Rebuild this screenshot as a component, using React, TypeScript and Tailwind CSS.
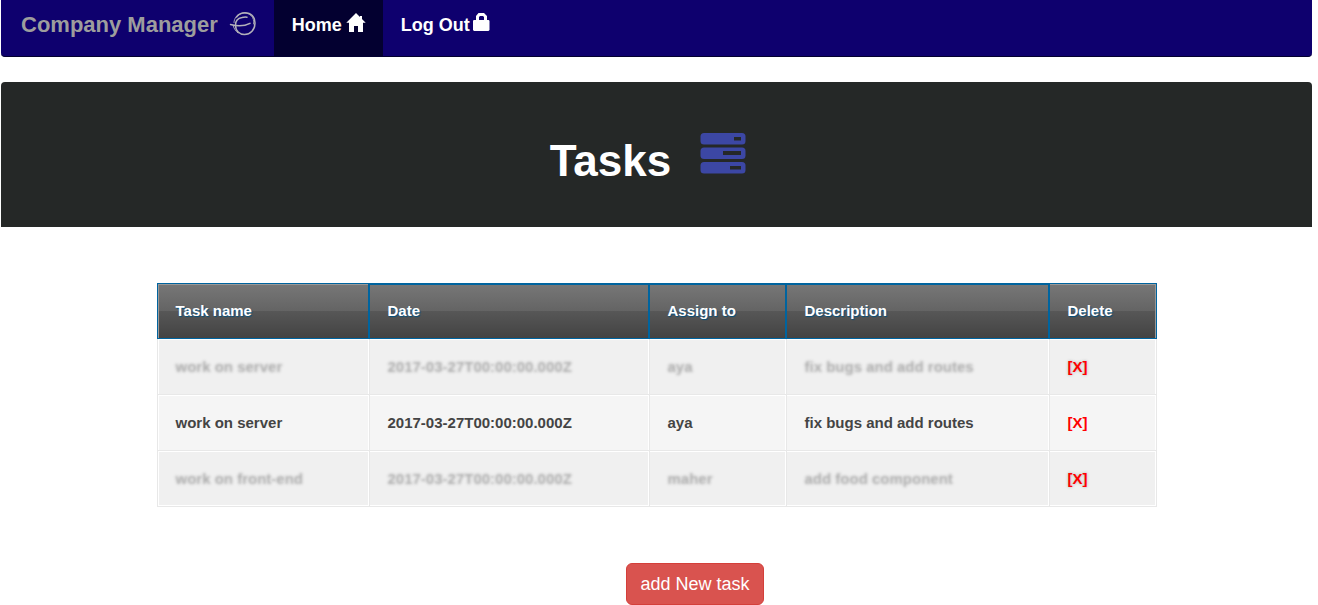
import React from "react";

type Task = { name: string; date: string; assignee: string; description: string; blurred: boolean };

const tasks: Task[] = [
  { name: "work on server", date: "2017-03-27T00:00:00.000Z", assignee: "aya", description: "fix bugs and add routes", blurred: true },
  { name: "work on server", date: "2017-03-27T00:00:00.000Z", assignee: "aya", description: "fix bugs and add routes", blurred: false },
  { name: "work on front-end", date: "2017-03-27T00:00:00.000Z", assignee: "maher", description: "add food component", blurred: true },
];

const columns = ["Task name", "Date", "Assign to", "Description", "Delete"];

function BrandIcon() {
  return (
    <svg viewBox="0 0 28 26" className="h-[26px] w-7 text-[#b3b1ba]" fill="none" stroke="currentColor" strokeLinecap="round" aria-hidden="true">
      <path d="M7.500 6C9.500 3 12.500 1.700 16 1.700c6 0 10 4.300 10 10.300C26 18.500 21.500 23.500 15.500 23.500 10.500 23.500 6.500 20 6.500 14 6.500 9.500 9.500 7.200 13 6.500c1.700-.4 3.500-.5 5-.3" strokeWidth="1.500" />
      <path d="M9 4.500C13 1 19 1.500 22 4.500c2.500 2.500 3 5.500 2.500 8.500" strokeWidth=".8" />
      <path d="M1.500 13.500c7 1.800 14 1.600 19.500-1.200" strokeWidth="1.500" />
      <path d="M4 14c.5 3 2.500 6 5 8M5 11.500c0-2 .8-4 2-5.500" strokeWidth=".9" />
    </svg>
  );
}

function HomeIcon() {
  return (
    <svg viewBox="0 0 20 19" className="h-[19px] w-5" fill="currentColor" aria-hidden="true">
      <path d="M10 0l9.700 9.700H17V19h-5v-6H8v6H3V9.700H.3z" />
      <path d="M14 3h2v3h-2z" />
    </svg>
  );
}

function LockIcon() {
  return (
    <svg viewBox="0 0 18 18" className="h-[18px] w-[18px]" fill="currentColor" aria-hidden="true">
      <path fillRule="evenodd" d="M4 7V3L6.500 0h5.500L15 3v4h1.700l.8.800v9.200l-1 1h-14.500l-1-1V7.800l.8-.8zM7 7h5V4l-1-1H8L7 4z" />
    </svg>
  );
}

function ServerIcon() {
  return (
    <svg viewBox="0 0 46 42" className="h-[42px] w-[46px]" aria-hidden="true">
      <g fill="#3c47a4">
        <rect x="0.500" y="0" width="45" height="11.500" rx="3.500" />
        <rect x="0.500" y="14.500" width="45" height="11.500" rx="3.500" />
        <rect x="0.500" y="29" width="45" height="11.500" rx="3.500" />
      </g>
      <g fill="#252827">
        <rect x="34" y="4" width="7" height="3.500" />
        <rect x="23" y="18" width="18" height="4" />
        <rect x="30" y="33" width="11" height="3.500" />
      </g>
    </svg>
  );
}

const headBase = "h-14 border-t border-b border-l border-[#00649f] bg-[linear-gradient(#777_0%,#646464_50%,#575757_50%,#434343_100%)] pt-0 pl-[18px] text-left align-middle font-bold text-white [text-shadow:1px_1px_1px_#00507f]";
const headShadow = [
  "shadow-[inset_-1px_0_0_#00649f,inset_1px_1px_0_#999]",
  "shadow-[inset_-1px_1px_0_#00649f]",
  "shadow-[inset_-1px_1px_0_#00649f]",
  "shadow-[inset_-1px_1px_0_#00649f]",
  "border-r shadow-[inset_-1px_1px_0_#999]",
];

function bodyCell(column: number, row: number) {
  return [
    "h-14 border-b border-l border-[#e8e8e8] pt-0.5 pl-[18px] align-middle",
    row % 2 === 0 ? "bg-[#f0f0f0]" : "bg-[#f5f5f5]",
    row === 2
      ? column === 0 ? "shadow-[inset_1px_1px_0_#fff,inset_-1px_-1px_0_#fff]" : "shadow-[inset_0_1px_0_#fff,inset_-1px_-1px_0_#fff]"
      : column === 0 ? "shadow-[inset_1px_1px_0_#fff,inset_-1px_0_0_#fff]" : "shadow-[inset_-1px_1px_0_#fff]",
    column === 4 ? "border-r" : "",
  ].join(" ");
}

export default function App() {
  return (
    <div className="pr-1.5 pl-px font-['Liberation_Sans',Arial,sans-serif]">
      <nav className="flex h-[57px] rounded-b border-b border-[#030030] bg-[#0e006e] text-lg font-bold text-white">
        <a href="#" className="flex items-start gap-[11px] pt-[11px] pr-[17px] pl-5 text-[22px] leading-7 text-[#9d9d9d]">
          Company Manager
          <BrandIcon />
        </a>
        <a href="#home" className="flex items-start gap-1 bg-[#030030] pt-[13px] pr-[17px] pl-[18px] leading-6">
          Home
          <HomeIcon />
        </a>
        <a href="#logout" className="flex items-start gap-0.5 px-[18px] pt-[13px] leading-6">
          Log Out
          <LockIcon />
        </a>
      </nav>

      <header className="mt-[25px] flex h-[145px] items-start justify-center gap-[29px] rounded-t bg-[#252827] pr-[17px] pt-[51px]">
        <h1 className="pt-[3px] text-[44px] leading-[50px] font-bold text-white">Tasks</h1>
        <ServerIcon />
      </header>

      <main className="pt-14">
        <table className="mx-auto w-full max-w-[1000px] table-fixed border-separate border-spacing-0 text-[15px] font-bold text-[#444]">
          <colgroup>
            <col className="w-[21.2%]" />
            <col className="w-[28%]" />
            <col className="w-[13.7%]" />
            <col className="w-[26.3%]" />
            <col className="w-[10.8%]" />
          </colgroup>
          <thead>
            <tr>
              {columns.map((label, i) => (
                <th key={label} scope="col" className={`${headBase} ${headShadow[i]}`}>{label}</th>
              ))}
            </tr>
          </thead>
          <tbody>
            {tasks.map((task, row) => (
              <tr key={row}>
                {[task.name, task.date, task.assignee, task.description].map((value, column) => (
                  <td key={column} className={bodyCell(column, row)}>
                    <span className={task.blurred ? "text-transparent [text-shadow:0_0_3px_#aaa]" : ""}>{value}</span>
                  </td>
                ))}
                <td className={bodyCell(4, row)}>
                  <button type="button" aria-label={`Delete ${task.name}`} className={`font-bold text-[#f00] ${task.blurred ? "[text-shadow:0_0_3px_#aaa]" : ""}`}>[X]</button>
                </td>
              </tr>
            ))}
          </tbody>
        </table>
        <div className="mt-14 flex justify-center pl-[77px]">
          <button type="button" className="h-[42px] rounded-md border border-[#d43f3a] bg-[#d9534f] px-[13px] text-lg leading-6 text-white">add New task</button>
        </div>
      </main>
    </div>
  );
}
